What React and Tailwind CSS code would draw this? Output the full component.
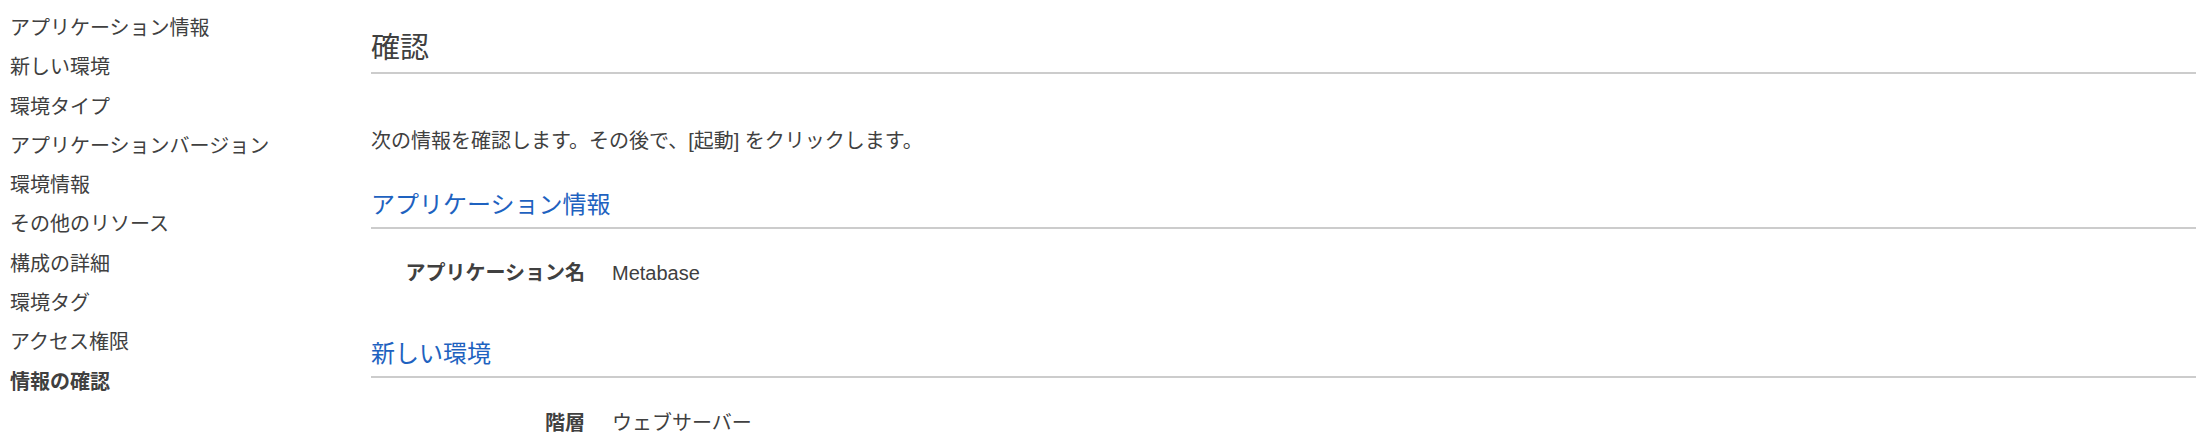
const steps = [
  'アプリケーション情報',
  '新しい環境',
  '環境タイプ',
  'アプリケーションバージョン',
  '環境情報',
  'その他のリソース',
  '構成の詳細',
  '環境タグ',
  'アクセス権限',
  '情報の確認',
];

const font = { fontFamily: '"Liberation Sans", "Noto Sans CJK JP", sans-serif' };

function Section({ title, className = '', children }) {
  return (
    <section>
      <h2 className={`text-[24px] leading-[34px] text-[#1e62c0] pb-[5px] border-b-2 border-[#cccccc] ${className}`}>
        {title}
      </h2>
      {children}
    </section>
  );
}

function Row({ label, value, className = 'mt-[30px]' }) {
  return (
    <div className={`grid grid-cols-[214px_1fr] gap-x-[27px] text-[20px] leading-[28px] ${className}`}>
      <div className="text-right font-bold">{label}</div>
      <div>{value}</div>
    </div>
  );
}

export default function App() {
  return (
    <div style={font} className="flex w-[2212px] h-[448px] bg-white text-[#404040] overflow-hidden">
      {/* Wizard steps */}
      <nav className="w-[371px] shrink-0 pl-[10px] pt-[9px]">
        {steps.map((s, i) => (
          <div
            key={s}
            className={`text-[20px] leading-[39.3px] ${i === steps.length - 1 ? 'font-bold' : ''}`}
          >
            {s}
          </div>
        ))}
      </nav>

      {/* Review */}
      <main className="flex-1 pr-[16px] pt-[28px]">
        <h1 className="text-[29px] leading-[40px] pb-[4px] border-b-2 border-[#cccccc]">確認</h1>
        <p className="mt-[53px] text-[20px] leading-[28px]">
          次の情報を確認します。その後で、[起動] をクリックします。
        </p>

        <div className="mt-[33px]">
          <Section title="アプリケーション情報">
            <Row label="アプリケーション名" value="Metabase" />
          </Section>
        </div>

        <div className="mt-[50px]">
          <Section title="新しい環境" className="pb-[4px]">
            <Row label="階層" value="ウェブサーバー" className="mt-[31px]" />
          </Section>
        </div>
      </main>
    </div>
  );
}
